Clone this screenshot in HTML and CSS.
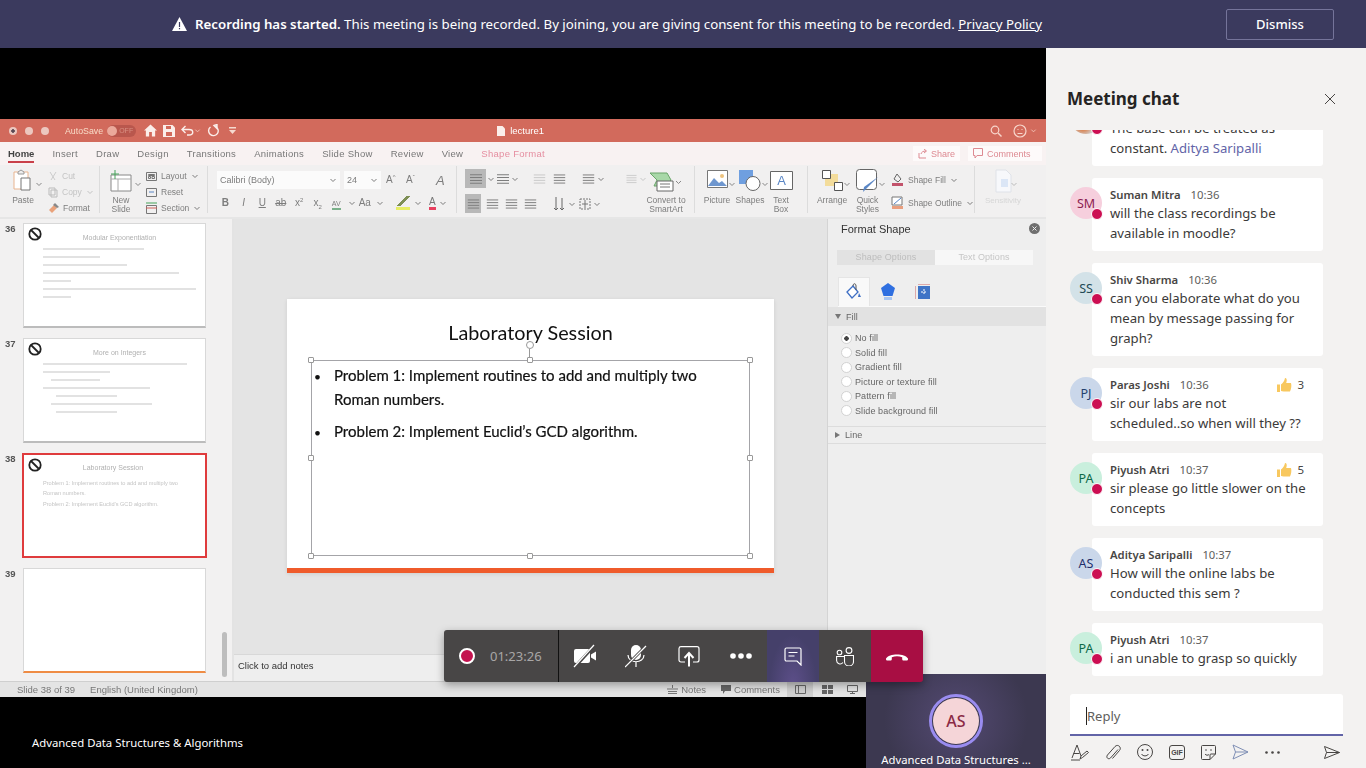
FILE: index.html
```html
<!DOCTYPE html>
<html lang="en">
<head>
    <meta charset="UTF-8">
    <meta name="viewport" content="width=device-width, initial-scale=1.0">
    <title>Meeting</title>
    <link rel="stylesheet" href="styles.css">
</head>
<body>
    <svg class="sprite" width="0" height="0">
        <symbol id="chev" viewBox="0 0 8 8"><path d="M1.5 3l2.5 2.5L6.500 3" fill="none" stroke="currentColor" stroke-width="1"/></symbol>
        <symbol id="noentry" viewBox="0 0 14 14"><circle cx="7" cy="7" r="5.700" fill="none" stroke="#222" stroke-width="1.800"/><path d="M3 3l8 8" stroke="#222" stroke-width="1.800"/></symbol>
        <symbol id="thumb" viewBox="0 0 16 16"><path d="M1 7.500h3V15H1zM5 7.500c2-1.500 3.500-3.500 4-6.500 1.800 0 2.300 2 1.200 5H15c.8 2.700.2 6-1 8.500H7.500L5 14z" fill="#f8c85f"/></symbol>
        <symbol id="lines" viewBox="0 0 16 14"><path d="M1 2h14M1 5.300h14M1 8.700h14M1 12h14" stroke="currentColor" stroke-width="1.200"/></symbol>
    </svg>

    <header class="banner">
        <svg class="banner-icon" width="15" height="14" viewBox="0 0 15 14"><path d="M7.500 0L15 14H0z" fill="#fff"/><path d="M6.900 5h1.200v5H6.900zM6.900 11h1.200v1.300H6.900z" fill="#3b3a5e"/></svg>
        <p class="banner-text"><b>Recording has started.</b> This meeting is being recorded. By joining, you are giving consent for this meeting to be recorded. <a href="#">Privacy Policy</a></p>
        <button class="dismiss">Dismiss</button>
    </header>

    <div class="workspace">
        <main class="stage">
            <div class="ppt">
                <div class="titlebar">
                    <span class="light light-close"></span><span class="light"></span><span class="light"></span>
                    <span class="autosave">AutoSave</span>
                    <span class="toggle"><i></i>OFF</span>
                    <svg width="13" height="13" viewBox="0 0 14 13"><path d="M7 0l7 6.500h-2V13H8.500V8h-3v5H2V6.500H0z" fill="#fbeeea"/></svg>
                    <svg width="12" height="12" viewBox="0 0 12 12"><path d="M0 0h9.500L12 2.500V12H0z" fill="#fbeeea"/><path d="M3 1h5v3H3zM3 7h6v4H3z" fill="#d26a5c"/></svg>
                    <svg width="13" height="11" viewBox="0 0 13 11"><path d="M4.500 1L1 4.500 4.500 8M1 4.500h7c5 0 5 5.500 0 5.500H6" fill="none" stroke="#fbeeea" stroke-width="1.400"/></svg>
                    <svg class="chev-title" width="7" height="7"><use href="#chev"/></svg>
                    <svg width="13" height="13" viewBox="0 0 13 13"><path d="M7 1.500l3 -1v4zM8.500 2.500a4.800 4.800 0 1 1-5 .5" fill="none" stroke="#fbeeea" stroke-width="1.400"/></svg>
                    <svg class="customize" width="7" height="7" viewBox="0 0 7 7"><path d="M0 0h7v1.500H0zM0 3h7L3.500 7z" fill="#f5d9cf"/></svg>
                    <span class="doc-name"><svg width="8" height="10" viewBox="0 0 8 10"><path d="M0 0h5.500L8 2.500V10H0z" fill="#fbeeea"/></svg>lecture1</span>
                    <span class="title-right">
                        <svg width="12" height="12" viewBox="0 0 12 12"><circle cx="5" cy="5" r="3.800" fill="none" stroke="#f7d5cb" stroke-width="1.200"/><path d="M8 8l3.500 3.500" stroke="#f7d5cb" stroke-width="1.400"/></svg>
                        <svg width="14" height="14" viewBox="0 0 14 14"><circle cx="7" cy="7" r="6" fill="none" stroke="#f7d5cb" stroke-width="1.200"/><path d="M4.500 5.500h1M8.500 5.500h1M4.500 9.500h5" stroke="#f7d5cb"/></svg>
                        <svg class="chev-title" width="7" height="7"><use href="#chev"/></svg>
                    </span>
                </div>

                <nav class="tabs">
                    <span class="tab tab-active">Home</span>
                    <span class="tab">Insert</span>
                    <span class="tab">Draw</span>
                    <span class="tab">Design</span>
                    <span class="tab">Transitions</span>
                    <span class="tab">Animations</span>
                    <span class="tab">Slide Show</span>
                    <span class="tab">Review</span>
                    <span class="tab">View</span>
                    <span class="tab tab-pink">Shape Format</span>
                    <span class="tab-btn tab-share"><svg width="9" height="10" viewBox="0 0 9 10"><path d="M1 4v5h7M3 5c.5-2 2-3 5-3M6 0l2.500 2L6 4" fill="none" stroke="#dd8a92"/></svg>Share</span>
                    <span class="tab-btn tab-comments"><svg width="10" height="11" viewBox="0 0 10 11"><path d="M.5.500h9v7H4L2 10V7.500H.5z" fill="none" stroke="#dd8a92"/></svg>Comments</span>
                </nav>

                <div class="ribbon">
                    <section class="rgroup g-clipboard">
                        <div class="big">
                            <svg width="22" height="23" viewBox="0 0 22 23"><path d="M2 3h14v17H2z" fill="#fff" stroke="#e8b48f"/><path d="M6 3l3-2 3 2v2H6z" fill="#eee" stroke="#999"/><path d="M9 9h9v12H9z" fill="#fff" stroke="#777"/></svg>
                            <span>Paste</span>
                        </div>
                        <svg class="chev" width="8" height="8"><use href="#chev"/></svg>
                        <ul class="small-list">
                            <li class="faded"><svg width="10" height="10" viewBox="0 0 10 10"><path d="M2 1l5 8M8 1L3 9" stroke="#ccc"/></svg>Cut</li>
                            <li class="faded"><svg width="10" height="11" viewBox="0 0 10 11"><path d="M1 1h6v7H1zM3 3h6v7H3z" fill="none" stroke="#bbb"/></svg>Copy<svg width="8" height="8"><use href="#chev"/></svg></li>
                            <li><svg width="11" height="11" viewBox="0 0 11 11"><path d="M1 7l5-5 3 3-5 5z" fill="#e9a27b"/><path d="M5 2l2-2 4 4-2 1z" fill="#888"/></svg>Format</li>
                        </ul>
                    </section>

                    <section class="rgroup g-slides">
                        <div class="big">
                            <svg width="24" height="23" viewBox="0 0 24 23"><path d="M2 6h20v16H2z" fill="#fff" stroke="#888"/><path d="M2 10h20M9 10v12" stroke="#aaa"/><path d="M6 1v9M2 5h8" stroke="#46a35a"/></svg>
                            <span>New<br>Slide</span>
                        </div>
                        <svg class="chev" width="8" height="8"><use href="#chev"/></svg>
                        <ul class="small-list">
                            <li><svg width="11" height="11" viewBox="0 0 11 11"><path d="M.5 1.500h10v8H.5zM2.500 3.500h6v1h-6zM2.500 5.500h2v2h-2zM6 5.500h2.500v2H6z" fill="none" stroke="#777"/></svg>Layout<svg width="8" height="8"><use href="#chev"/></svg></li>
                            <li><svg width="11" height="11" viewBox="0 0 11 11"><path d="M.5 1.500h10v8H.5z" fill="none" stroke="#777"/><path d="M3 5h5" stroke="#5a86c5"/></svg>Reset</li>
                            <li><svg width="11" height="12" viewBox="0 0 11 12"><path d="M0 1h11" stroke="#46a35a"/><path d="M.5 3.500h10v8H.5z" fill="none" stroke="#777"/><path d="M0 6h11" stroke="#d0605a"/></svg>Section<svg width="8" height="8"><use href="#chev"/></svg></li>
                        </ul>
                    </section>

                    <section class="rgroup g-font">
                        <div class="rrow">
                            <span class="combo combo-font">Calibri (Body)<svg width="8" height="8"><use href="#chev"/></svg></span>
                            <span class="combo combo-size">24<svg width="8" height="8"><use href="#chev"/></svg></span>
                            <span class="glyph glyph-a">A<sup>^</sup></span>
                            <span class="glyph glyph-a">A<sup>ˇ</sup></span>
                            <span class="glyph glyph-clear">A</span>
                        </div>
                        <div class="rrow rrow-fmt">
                            <b class="cell">B</b><i class="cell">I</i><u class="cell">U</u><s class="cell">ab</s><span class="cell">x<sup>2</sup></span><span class="cell">x<sub>2</sub></span>
                            <span class="cell"><span class="av">AV</span></span><svg class="m2" width="8" height="8"><use href="#chev"/></svg>
                            <span class="cell">Aa</span><svg class="m2" width="8" height="8"><use href="#chev"/></svg>
                            <span class="hl-pen"></span><svg class="m4" width="8" height="8"><use href="#chev"/></svg>
                            <span class="color-a">A</span><svg class="m3" width="8" height="8"><use href="#chev"/></svg>
                        </div>
                    </section>

                    <section class="rgroup g-para">
                        <div class="para-rows">
                            <div class="rrow rrow-para">
                                <span class="para-btn para-on"><svg width="14" height="12"><use href="#lines"/></svg></span>
                                <svg class="m1" width="8" height="8"><use href="#chev"/></svg>
                                <svg class="m1" width="14" height="12"><use href="#lines"/></svg>
                                <svg class="m1" width="8" height="8"><use href="#chev"/></svg>
                                <svg class="m14 faint" width="13" height="12"><use href="#lines"/></svg>
                                <svg class="m7" width="13" height="12"><use href="#lines"/></svg>
                                <svg class="m16" width="13" height="12"><use href="#lines"/></svg>
                                <svg class="m2" width="8" height="8"><use href="#chev"/></svg>
                                <svg class="m20 faint" width="13" height="10"><use href="#lines"/></svg>
                                <svg class="m1 faint" width="8" height="8"><use href="#chev"/></svg>
                            </div>
                            <div class="rrow rrow-para">
                                <span class="para-btn para-on para-narrow"><svg width="13" height="12"><use href="#lines"/></svg></span>
                                <svg class="m5" width="13" height="12"><use href="#lines"/></svg>
                                <svg class="m6" width="13" height="12"><use href="#lines"/></svg>
                                <svg class="m6" width="13" height="12"><use href="#lines"/></svg>
                                <svg class="m17" width="12" height="16" viewBox="0 0 12 16"><path d="M2 1v13M0 12l2 2 2-2M8 2v12M6 12l2 2 2-2" fill="none" stroke="#666"/></svg>
                                <svg class="m2" width="8" height="8"><use href="#chev"/></svg>
                                <svg class="m3" width="12" height="12" viewBox="0 0 12 12"><path d="M1 1h10v10H1z" fill="none" stroke="#777" stroke-dasharray="2 1"/><path d="M6 2v8M3 6h6" stroke="#777"/></svg>
                                <svg class="m2" width="8" height="8"><use href="#chev"/></svg>
                            </div>
                        </div>
                        <div class="big big-smartart">
                            <svg width="32" height="22" viewBox="0 0 32 22"><path d="M0 1h17l4 7-4 6H4l3-6z" fill="#a8d8a8" stroke="#6aa56a"/><path d="M7 9h16v10H7z" fill="#fff" stroke="#666"/><path d="M10 12h10M10 15h10" stroke="#777"/><path d="M26 9l2.500 2.500L31 9" fill="none" stroke="#888"/></svg>
                            <span>Convert to<br>SmartArt</span>
                        </div>
                    </section>

                    <section class="rgroup g-insert">
                        <div class="big big-picture">
                            <svg width="21" height="18" viewBox="0 0 21 18"><path d="M.5.500h20v17H.5z" fill="#fff" stroke="#777"/><path d="M1 16l6-8 5 5 3-2 5 5z" fill="#6f97cf"/><circle cx="15" cy="6" r="2" fill="#ecc27e"/></svg>
                            <span>Picture</span>
                        </div>
                        <svg class="chev" width="8" height="8"><use href="#chev"/></svg>
                        <div class="big big-shapes">
                            <svg width="23" height="21" viewBox="0 0 23 21"><path d="M0 0h14v14H0z" fill="#6f9fe0"/><circle cx="14" cy="13.500" r="7" fill="#fff" stroke="#666"/></svg>
                            <span>Shapes</span>
                        </div>
                        <svg class="chev" width="8" height="8"><use href="#chev"/></svg>
                        <div class="big big-textbox">
                            <svg class="textbox-icon" width="23" height="19" viewBox="0 0 23 19"><path d="M.5.500h22v18H.5z" fill="#fff" stroke="#666"/><text x="11.500" y="14" text-anchor="middle" font-size="13" font-family="Liberation Sans" fill="#5a86c5">A</text></svg>
                            <span>Text<br>Box</span>
                        </div>
                    </section>

                    <section class="rgroup g-drawing">
                        <div class="big big-arrange">
                            <svg width="21" height="21" viewBox="0 0 21 21"><path d="M3 4h13v12H3z" fill="#f3dc9b"/><path d="M.5.500h8v8h-8zM12.500 12.500h8v8h-8z" fill="#fff" stroke="#555"/></svg>
                            <span>Arrange</span>
                        </div>
                        <svg class="chev" width="8" height="8"><use href="#chev"/></svg>
                        <div class="big big-quick">
                            <svg width="24" height="23" viewBox="0 0 24 23"><rect x=".5" y=".5" width="20" height="20" rx="3" fill="#fff" stroke="#666"/><path d="M22 8L10 20l-3 3 1-5z" fill="#5a86c5"/></svg>
                            <span>Quick<br>Styles</span>
                        </div>
                        <svg class="chev" width="8" height="8"><use href="#chev"/></svg>
                        <ul class="small-list shape-list">
                            <li><svg width="13" height="12" viewBox="0 0 13 12"><path d="M6 0l4 5-3 3-4-3z" fill="none" stroke="#666"/><path d="M1 9h11v3H1z" fill="#c2536b"/></svg>Shape Fill<svg width="8" height="8"><use href="#chev"/></svg></li>
                            <li><svg width="13" height="13" viewBox="0 0 13 13"><path d="M1 1h10v8H1z" fill="#fff" stroke="#777"/><path d="M3 8l7-6" stroke="#5a86c5"/><path d="M1 10h11v3H1z" fill="#ea9f7e"/></svg>Shape Outline<svg width="8" height="8"><use href="#chev"/></svg></li>
                        </ul>
                    </section>

                    <section class="rgroup g-sensitivity">
                        <div class="big big-sens">
                            <svg width="17" height="24" viewBox="0 0 17 24"><path d="M1 1h10l5 5v17H1z" fill="#f7f8fb" stroke="#dfe2e8"/><path d="M6 10h7v8H6z" fill="#dbe6f6"/></svg>
                            <span>Sensitivity</span>
                        </div>
                        <svg class="chev chev-faint" width="8" height="8"><use href="#chev"/></svg>
                    </section>
                </div>

                <div class="ppt-main">
                    <aside class="thumbs">
                        <div class="thumb-row">
                            <span class="thumb-num">36</span>
                            <div class="thumb thumb-shadow">
                                <svg class="noentry" width="14" height="14"><use href="#noentry"/></svg>
                                <p class="thumb-title">Modular Exponentiation</p>
                                <span class="bar w66"></span><span class="bar w37"></span><span class="bar w55"></span><span class="bar w89"></span><span class="bar w18"></span><span class="bar w100"></span><span class="bar w18"></span>
                            </div>
                        </div>
                        <div class="thumb-row">
                            <span class="thumb-num">37</span>
                            <div class="thumb thumb-shadow">
                                <svg class="noentry" width="14" height="14"><use href="#noentry"/></svg>
                                <p class="thumb-title">More on Integers</p>
                                <span class="bar w94"></span><span class="bar w44"></span><span class="bar w32 bar-sub"></span><span class="bar w70"></span><span class="bar w40 bar-sub2"></span><span class="bar w66 bar-sub"></span><span class="bar w40 bar-sub2"></span>
                            </div>
                        </div>
                        <div class="thumb-row">
                            <span class="thumb-num">38</span>
                            <div class="thumb thumb-on">
                                <svg class="noentry" width="14" height="14"><use href="#noentry"/></svg>
                                <p class="thumb-title">Laboratory Session</p>
                                <p class="thumb-text">Problem 1: Implement routines to add and multiply two Roman numbers.</p>
                                <p class="thumb-text">Problem 2: Implement Euclid’s GCD algorithm.</p>
                            </div>
                        </div>
                        <div class="thumb-row">
                            <span class="thumb-num">39</span>
                            <div class="thumb thumb-empty"></div>
                        </div>
                        <span class="thumb-scroll"></span>
                    </aside>

                    <div class="editor">
                        <div class="canvas">
                            <div class="slide">
                                <h2 class="slide-title">Laboratory Session</h2>
                                <div class="textbox">
                                    <ul>
                                        <li>Problem 1: Implement routines to add and multiply two Roman numbers.</li>
                                        <li>Problem 2: Implement Euclid’s GCD algorithm.</li>
                                    </ul>
                                    <span class="rotate"></span>
                                    <span class="handle h-tl"></span><span class="handle h-tc"></span><span class="handle h-tr"></span>
                                    <span class="handle h-ml"></span><span class="handle h-mr"></span>
                                    <span class="handle h-bl"></span><span class="handle h-bc"></span><span class="handle h-br"></span>
                                </div>
                                <div class="slide-bar"></div>
                            </div>
                        </div>
                        <div class="notes">Click to add notes</div>
                    </div>

                    <aside class="format">
                        <div class="format-head">
                            <span>Format Shape</span>
                            <svg width="11" height="11" viewBox="0 0 11 11"><circle cx="5.500" cy="5.500" r="5.500" fill="#6f6f6f"/><path d="M3.500 3.500l4 4M7.500 3.500l-4 4" stroke="#eee"/></svg>
                        </div>
                        <div class="format-tabs">
                            <span class="ftab ftab-on">Shape Options</span>
                            <span class="ftab">Text Options</span>
                        </div>
                        <div class="format-icons">
                            <span class="ficon ficon-on"><svg width="16" height="18" viewBox="0 0 16 18"><path d="M1 9l6-6 5 6-6 6z" fill="#fff" stroke="#3f6fc4" stroke-width="1.300"/><path d="M7 3c0-3 3-3 3 0v4" fill="none" stroke="#555"/><path d="M13 10l2 4h-3z" fill="#3f6fc4"/></svg></span>
                            <span class="ficon"><svg width="14" height="17" viewBox="0 0 14 17"><path d="M7 0l7 5-2.500 8h-9L0 5z" fill="#2f6fe0"/><path d="M3 14h8v3H3z" fill="#a9c6f2"/></svg></span>
                            <span class="ficon"><svg width="15" height="15" viewBox="0 0 15 15"><path d="M3 2h12v13H3z" fill="#3f74c6"/><path d="M0 2v13M3 0h12" stroke="#c66" stroke-width="1"/><path d="M9 5v6M6 8h6" stroke="#fff" stroke-dasharray="2 1"/></svg></span>
                        </div>
                        <div class="fsection-head"><span class="tri-down"></span>Fill</div>
                        <ul class="radios">
                            <li><span class="radio radio-on"></span>No fill</li>
                            <li><span class="radio"></span>Solid fill</li>
                            <li><span class="radio"></span>Gradient fill</li>
                            <li><span class="radio"></span>Picture or texture fill</li>
                            <li><span class="radio"></span>Pattern fill</li>
                            <li><span class="radio"></span>Slide background fill</li>
                        </ul>
                        <div class="fsection-line"><span class="tri-right"></span>Line</div>
                    </aside>
                </div>

                <footer class="statusbar">
                    <span>Slide 38 of 39</span>
                    <span>English (United Kingdom)</span>
                    <span class="status-right">
                        <span class="status-item status-notes"><svg width="11" height="9" viewBox="0 0 11 9"><path d="M0 4h11M1 6.500h9M1 8.500h9M5.500 0v3" stroke="#777"/></svg>Notes</span>
                        <span class="status-item"><svg width="10" height="9" viewBox="0 0 10 9"><path d="M0 0h10v6H4L2 9V6H0z" fill="#666"/></svg>Comments</span>
                        <span class="view-btn view-on"><svg width="11" height="9" viewBox="0 0 11 9"><path d="M.5.500h10v8H.5zM3.500 1v7" fill="none" stroke="#666"/></svg></span>
                        <span class="view-btn"><svg width="11" height="9" viewBox="0 0 11 9"><path d="M0 0h5v4H0zM6 0h5v4H6zM0 5h5v4H0zM6 5h5v4H6z" fill="#666"/></svg></span>
                        <span class="view-btn"><svg width="11" height="9" viewBox="0 0 11 9"><path d="M.5.500h10v6H.5zM5.500 7v2M3 8.500h5" fill="none" stroke="#666"/></svg></span>
                    </span>
                </footer>
            </div>

            <p class="caption">Advanced Data Structures &amp; Algorithms</p>

            <!-- controls and tile float over the shared screen -->
            <div class="tile">
                <div class="tile-avatar"><span>AS</span></div>
                <p class="tile-name">Advanced Data Structures ...</p>
            </div>

            <div class="controls">
                <div class="rec-box">
                    <span class="rec-dot"></span>
                    <span class="rec-time">01:23:26</span>
                </div>
                <button class="ctrl ctrl-cam"><svg width="24" height="24" viewBox="0 0 24 24"><rect x="1" y="5" width="16" height="14" rx="2" fill="#fff"/><path d="M18 10.500l5-3v9l-5-3z" fill="#fff"/><path d="M1 24L22 1" stroke="#484646" stroke-width="3"/><path d="M1 23L21 1" stroke="#fff" stroke-width="1.200"/></svg></button>
                <button class="ctrl ctrl-mic"><svg width="22" height="24" viewBox="0 0 22 24"><rect x="6" y="1" width="10" height="15" rx="5" fill="#fff"/><path d="M3 11c0 9 16 9 16 0M11 18v5" fill="none" stroke="#fff" stroke-width="1.200"/><path d="M0 23L21 2" stroke="#484646" stroke-width="3"/><path d="M0 23L21 2" stroke="#fff" stroke-width="1.200"/></svg></button>
                <button class="ctrl ctrl-share"><svg width="22" height="21" viewBox="0 0 22 21"><path d="M7 16H3a2 2 0 0 1-2-2V2.500A2 2 0 0 1 3 .7h16a2 2 0 0 1 2 2V14a2 2 0 0 1-2 2h-4" fill="none" stroke="#fff" stroke-width="1.200"/><path d="M11 20.500V8M6.500 12L11 7l4.500 5" fill="none" stroke="#fff" stroke-width="2"/></svg></button>
                <button class="ctrl ctrl-more"><svg width="22" height="6" viewBox="0 0 22 6"><circle cx="3" cy="3" r="2.800" fill="#fff"/><circle cx="11" cy="3" r="2.800" fill="#fff"/><circle cx="19" cy="3" r="2.800" fill="#fff"/></svg></button>
                <button class="ctrl ctrl-chat"><svg width="18" height="19" viewBox="0 0 18 19"><path d="M2.500 1h13A1.500 1.500 0 0 1 17 2.500V18l-4-4H2.500A1.500 1.500 0 0 1 1 12.500v-10A1.500 1.500 0 0 1 2.500 1z" fill="none" stroke="#fff" stroke-width="1.200"/><path d="M4.500 5.500h9M4.500 9h6" stroke="#fff" stroke-width="1.200"/></svg></button>
                <button class="ctrl ctrl-people"><svg width="18" height="19" viewBox="0 0 18 19"><circle cx="13" cy="3.500" r="2.900" fill="none" stroke="#fff" stroke-width="1.100"/><circle cx="3.500" cy="5.500" r="2.300" fill="none" stroke="#fff" stroke-width="1.100"/><path d="M8.500 8.500h9v6a4.500 4.500 0 0 1-9 0z" fill="none" stroke="#fff" stroke-width="1.100"/><path d="M8.500 9.500H.6v4a3.500 3.500 0 0 0 6.300 2" fill="none" stroke="#fff" stroke-width="1.100"/></svg></button>
                <button class="ctrl-hang"><svg width="22" height="9" viewBox="0 0 22 9"><path d="M0 6.500C3 1 19 1 22 6.500c.3 1-.3 2-1 2h-3.500c-1 0-1.300-.7-1.300-1.500V5.200C13 4 9 4 5.800 5.200V7c0 .8-.3 1.500-1.300 1.500H1c-.7 0-1.300-1-1-2z" fill="#fff"/></svg></button>
            </div>
        </main>

        <aside class="chat">
            <div class="chat-head">
                <h1>Meeting chat</h1>
                <svg width="12" height="12" viewBox="0 0 12 12"><path d="M1 1l10 10M11 1L1 11" stroke="#484644" stroke-width="1"/></svg>
            </div>

            <div class="messages">
                <div class="msg">
                    <span class="avatar avatar-photo"><i class="status"></i></span>
                    <div class="msg-meta"></div>
                    <p class="msg-body">The base can be treated as constant. <a href="#">Aditya Saripalli</a></p>
                </div>
                <div class="msg">
                    <span class="avatar avatar-pink">SM<i class="status"></i></span>
                    <div class="msg-meta"><span class="msg-name">Suman Mitra</span><span class="msg-time">10:36</span></div>
                    <p class="msg-body">will the class recordings be available in moodle?</p>
                </div>
                <div class="msg">
                    <span class="avatar avatar-teal">SS<i class="status"></i></span>
                    <div class="msg-meta"><span class="msg-name">Shiv Sharma</span><span class="msg-time">10:36</span></div>
                    <p class="msg-body">can you elaborate what do you mean by message passing for graph?</p>
                </div>
                <div class="msg">
                    <span class="avatar avatar-blue">PJ<i class="status"></i></span>
                    <div class="msg-meta"><span class="msg-name">Paras Joshi</span><span class="msg-time">10:36</span>
                        <span class="reaction"><svg width="16" height="16"><use href="#thumb"/></svg>3</span></div>
                    <p class="msg-body">sir our labs are not scheduled..so when will they ??</p>
                </div>
                <div class="msg">
                    <span class="avatar avatar-green">PA<i class="status"></i></span>
                    <div class="msg-meta"><span class="msg-name">Piyush Atri</span><span class="msg-time">10:37</span>
                        <span class="reaction"><svg width="16" height="16"><use href="#thumb"/></svg>5</span></div>
                    <p class="msg-body">sir please go little slower on the concepts</p>
                </div>
                <div class="msg">
                    <span class="avatar avatar-blue avatar-navy">AS<i class="status"></i></span>
                    <div class="msg-meta"><span class="msg-name">Aditya Saripalli</span><span class="msg-time">10:37</span></div>
                    <p class="msg-body">How will the online labs be conducted this sem ?</p>
                </div>
                <div class="msg">
                    <span class="avatar avatar-green">PA<i class="status"></i></span>
                    <div class="msg-meta"><span class="msg-name">Piyush Atri</span><span class="msg-time">10:37</span></div>
                    <p class="msg-body">i an unable to grasp so quickly</p>
                </div>
            </div>

            <div class="composer">
                <div class="reply"><span class="caret"></span>Reply</div>
                <div class="composer-tools">
                    <svg width="18" height="17" viewBox="0 0 18 17"><path d="M1 14L6 1l4 11M2.500 9.500h6" fill="none" stroke="#484644"/><path d="M9 15l1-3 6-5 1.500 1.500-6 5z" fill="none" stroke="#484644"/><path d="M0 16h9" stroke="#484644"/></svg>
                    <svg width="16" height="17" viewBox="0 0 16 17"><path d="M13 5l-7.500 8.500c-2 2 -5-.5-3-3L10 2c3-3 7 1 4.500 4L7.500 14" fill="none" stroke="#484644" transform="translate(0 .5)"/></svg>
                    <svg width="16" height="16" viewBox="0 0 16 16"><circle cx="8" cy="8" r="7.500" fill="none" stroke="#484644"/><circle cx="5.500" cy="6" r="1" fill="#484644"/><circle cx="10.500" cy="6" r="1" fill="#484644"/><path d="M4.500 10c1.500 2.500 5.500 2.500 7 0" fill="none" stroke="#484644"/></svg>
                    <span class="gif">GIF</span>
                    <svg width="15" height="15" viewBox="0 0 15 15"><path d="M1.500.5h12a1 1 0 0 1 1 1V9l-5.500 5.500H1.500a1 1 0 0 1-1-1v-12a1 1 0 0 1 1-1z" fill="none" stroke="#484644"/><path d="M9 14.500V10a1 1 0 0 1 1-1h4.500M4 9c1 1.500 3 1.500 4 .5" fill="none" stroke="#484644"/><circle cx="5" cy="5" r=".8" fill="#484644"/><circle cx="10" cy="5" r=".8" fill="#484644"/></svg>
                    <svg width="17" height="16" viewBox="0 0 17 16"><path d="M1 1l15 7-15 7 2.500-7zM3.500 8H16" fill="none" stroke="#7f8fb5"/></svg>
                    <svg width="15" height="3" viewBox="0 0 15 3"><circle cx="1.500" cy="1.500" r="1.300" fill="#484644"/><circle cx="7.500" cy="1.500" r="1.300" fill="#484644"/><circle cx="13.500" cy="1.500" r="1.300" fill="#484644"/></svg>
                    <svg class="send" width="16" height="13" viewBox="0 0 16 13"><path d="M.5.500l15 6-15 6 2-6zM2.500 6.500h13" fill="none" stroke="#484644"/></svg>
                </div>
            </div>
        </aside>
    </div>
</body>
</html>
```

FILE: styles.css
```css
/* page */
* {
    box-sizing: border-box;
}

html, body {
    height: 100%;
}

body {
    margin: 0;
    width: 1366px;
    height: 768px;
    overflow: hidden;
    background: #000;
    font-family: "Noto Sans", "Liberation Sans", sans-serif;
    display: flex;
    flex-direction: column;
}

p, ul, h1, h2 {
    margin: 0;
    padding: 0;
}

ul {
    list-style: none;
}

button {
    font-family: inherit;
    border: none;
    padding: 0;
    background: none;
    color: inherit;
}

svg {
    display: block;
    flex: none;
}

.sprite {
    position: absolute;
}

/* recording banner */
.banner {
    height: 48px;
    background: #3b3a5e;
    color: #fff;
    display: flex;
    align-items: center;
    padding: 0 32px 0 172px;
    flex: none;
}

.banner-icon {
    margin-right: 8px;
}

.banner-text {
    font-size: 13.270px;
    white-space: nowrap;
}

.banner-text b {
    font-weight: 600;
}

.banner-text a {
    color: #fff;
}

.dismiss {
    margin-left: auto;
    width: 108px;
    height: 31px;
    border: 1px solid #75749a;
    border-radius: 2px;
    font-size: 13px;
    font-weight: 500;
}

.workspace {
    flex: 1;
    display: flex;
    min-height: 0;
}

/* stage and shared screen */
.stage {
    width: 1046px;
    position: relative;
    padding-top: 71px;
    overflow: hidden;
}

.ppt {
    height: 578px;
    display: flex;
    flex-direction: column;
    background: #f1f0f0;
    font-family: "Liberation Sans", sans-serif;
    filter: blur(0.45px);
    overflow: hidden;
}

.titlebar {
    height: 23px;
    background: #d26a5c;
    display: flex;
    align-items: center;
    padding-left: 9px;
    gap: 6px;
    color: #f7d9cf;
    position: relative;
    flex: none;
}

.light {
    width: 8px;
    height: 8px;
    border-radius: 50%;
    background: #ecc7bf;
    margin-right: 2px;
}

.light-close {
    background: radial-gradient(circle, #5c4a55 0 1.500px, #ecc7bf 2px);
}

.autosave {
    font-size: 8.800px;
    margin-left: 8px;
    color: #f8dcc8;
}

.toggle {
    width: 29px;
    height: 12px;
    border-radius: 6px;
    background: #b9574d;
    color: #d99083;
    font-size: 7px;
    display: flex;
    align-items: center;
    gap: 2px;
    margin-left: -2px;
    margin-right: 2px;
}

.toggle i {
    width: 10px;
    height: 10px;
    border-radius: 50%;
    background: #eba99b;
}

.chev-title {
    margin-left: -6px;
    color: #f3c7bb;
}

.customize {
    margin-left: 3px;
}

.doc-name {
    margin-left: 255px;
    font-size: 9.500px;
    color: #fff;
    display: flex;
    align-items: center;
    gap: 5px;
}

.title-right {
    margin-left: auto;
    margin-right: 9px;
    display: flex;
    align-items: center;
    gap: 11px;
}

.title-right .chev-title {
    margin-left: -8px;
}

.tabs {
    height: 23px;
    background: #f8f2f2;
    display: flex;
    align-items: center;
    padding-left: 8px;
    gap: 18px;
    font-size: 9.500px;
    letter-spacing: 0.3px;
    color: #777;
    flex: none;
}

.tab {
    line-height: 15px;
    white-space: nowrap;
}

.tab-active {
    color: #444;
    font-weight: 700;
    letter-spacing: 0;
    box-shadow: 0 2px 0 #c9404a;
}

.tab-pink {
    color: #e58ea0;
}

.tab-btn {
    height: 15px;
    background: #fdfafa;
    color: #dd8a92;
    display: flex;
    align-items: center;
    gap: 4px;
    font-size: 9px;
    letter-spacing: 0;
    padding: 0 5px;
}

.tab-share {
    margin-left: auto;
    width: 47px;
    margin-right: -10px;
}

.tab-comments {
    width: 74px;
    margin-right: 4px;
}

/* ribbon */
.ribbon {
    height: 54px;
    background: #f1f0f0;
    display: flex;
    color: #7d7d7d;
    font-size: 8.500px;
    border-bottom: 2px solid #e6e6e6;
    flex: none;
}

.rgroup {
    display: flex;
    margin: 1px 0 4px;
    border-right: 1px solid #dcdcdc;
    flex: none;
}

.g-clipboard {
    width: 100px;
    padding-left: 12px;
}

.g-slides {
    width: 108px;
    padding-left: 9px;
}

.g-font {
    width: 249px;
    padding: 5px 0 0 9px;
    flex-direction: column;
    gap: 6px;
}

.g-para {
    width: 238px;
    padding: 3px 0 0 8px;
}

.g-insert {
    width: 113px;
    padding-left: 9px;
}

.g-drawing {
    width: 167px;
    padding-left: 10px;
}

.g-sensitivity {
    width: 71px;
    padding-left: 10px;
    border-right: none;
}

.big {
    display: flex;
    flex-direction: column;
    align-items: center;
    text-align: center;
    line-height: 9px;
    padding-top: 3px;
    gap: 4px;
    white-space: nowrap;
}

.big span {
    display: block;
}

.chev {
    margin: 14px 0 0 1px;
    color: #888;
}

.chev-faint {
    color: #bbb;
    margin-left: -11px;
}

.small-list {
    margin-left: 5px;
    padding-top: 2px;
}

.g-slides .small-list {
    margin-left: 4px;
}

.small-list li {
    height: 16px;
    display: flex;
    align-items: center;
    gap: 4px;
    white-space: nowrap;
}

.small-list .faded {
    color: #c4c4c4;
}

.rrow {
    display: flex;
    align-items: center;
}

.combo {
    height: 18px;
    background: #fbfbfb;
    display: flex;
    align-items: center;
    justify-content: space-between;
    padding: 0 3px;
    font-size: 9px;
    flex: none;
}

.combo-font {
    width: 123px;
}

.combo-size {
    width: 37px;
    margin: 0 5px 0 4px;
}

.glyph {
    font-size: 10px;
}

.glyph sup {
    font-size: 6px;
}

.glyph-a {
    width: 20px;
}

.glyph-clear {
    margin-left: 10px;
    font-size: 13px;
    font-style: italic;
}

.rrow-fmt {
    font-size: 10px;
    height: 16px;
    margin-left: -1px;
}

.cell {
    width: 18.500px;
    text-align: center;
    line-height: 12px;
    flex: none;
}

.rrow-fmt sup, .rrow-fmt sub {
    font-size: 6px;
    line-height: 0;
}

.av {
    display: inline-block;
    font-size: 7px;
    border-bottom: 2px solid #7ab08a;
    line-height: 8px;
}

.hl-pen {
    width: 14px;
    height: 14px;
    margin-left: 12px;
    background: linear-gradient(135deg, transparent 45%, #7e8f55 45% 60%, transparent 60%) 0 0 / 14px 10px no-repeat, linear-gradient(#e7ee63, #e7ee63) 0 11px / 14px 3px no-repeat;
}

.color-a {
    margin-left: 7px;
    color: #777;
    border-bottom: 3px solid #e8405f;
    line-height: 11px;
}

.para-rows {
    width: 175px;
    display: flex;
    flex-direction: column;
    gap: 6px;
    flex: none;
}

.rrow-para {
    height: 19px;
}

.para-btn {
    width: 21px;
    height: 19px;
    display: flex;
    align-items: center;
    justify-content: center;
    flex: none;
}

.para-on {
    background: #b8b8b8;
}

.para-narrow {
    width: 16px;
}

/* spacing between ribbon icons */
.m1 { margin-left: 1px; }
.m2 { margin-left: 2px; }
.m3 { margin-left: 3px; }
.m4 { margin-left: 4px; }
.m5 { margin-left: 5px; }
.m6 { margin-left: 6px; }
.m7 { margin-left: 7px; }
.m14 { margin-left: 14px; }
.m16 { margin-left: 16px; }
.m17 { margin-left: 17px; }
.m20 { margin-left: 20px; }

.faint {
    color: #c8c8c8;
}

.big-smartart {
    width: 50px;
    margin-left: 1px;
    flex: none;
    gap: 1.500px;
}

.big-picture {
    width: 26px;
    padding-top: 4px;
}

.big-picture span {
    margin-top: 3.500px;
}

.big-shapes {
    width: 26px;
    margin-left: 1px;
    padding-top: 4px;
}

.big-shapes span {
    margin-top: 0.500px;
}

.g-insert .chev {
    margin-left: -2px;
}

.big-textbox {
    width: 24px;
    padding-top: 5px;
}

.textbox-icon {
    margin-bottom: 2px;
}

.big-arrange {
    width: 28px;
    padding-top: 4px;
}

.big-arrange span {
    margin-top: 0.500px;
}

.big-quick {
    width: 27px;
    margin-left: 3px;
}

.g-drawing .chev {
    margin-left: -3px;
}

.shape-list {
    margin-left: 5px;
    padding-top: 2px;
}

.shape-list li {
    height: 23px;
}

.big-sens span {
    color: #d6d6d6;
    font-size: 8px;
}

.big-sens {
    padding-top: 3px;
    gap: 3px;
}

/* panes under the ribbon */
.ppt-main {
    flex: 1;
    display: flex;
    min-height: 0;
}

.thumbs {
    width: 234px;
    background: #f2f1f1;
    border-right: 2px solid #e3e3e3;
    padding-top: 4px;
    display: flex;
    flex-direction: column;
    gap: 10px;
    position: relative;
}

.thumb-row {
    display: flex;
    align-items: flex-start;
    padding-left: 5px;
}

.thumb-num {
    width: 18px;
    font-size: 9.500px;
    font-weight: 700;
    color: #555;
}

.thumb {
    width: 183px;
    height: 105px;
    background: #fff;
    border: 1px solid #d8d8d8;
    position: relative;
    padding: 10px 9px 0 19px;
    overflow: hidden;
}

.thumb-shadow {
    border-bottom: 2px solid #bcbcbc;
}

.thumb-on {
    border: 2px solid #df3b3d;
    width: 185px;
    margin-left: -1px;
    padding-top: 9px;
    padding-right: 22px;
}

.thumb-empty {
    border-bottom: 2px solid #ef8c45;
}

.noentry {
    position: absolute;
    left: 4px;
    top: 3px;
}

.thumb-title {
    text-align: center;
    font-size: 7px;
    color: #b0b0b0;
    margin-bottom: 7px;
    filter: blur(0.3px);
}

.bar {
    display: block;
    height: 2px;
    background: #e2e2e2;
    margin-bottom: 6px;
    filter: blur(0.5px);
}

.w18 { width: 18%; }
.w32 { width: 32%; }
.w37 { width: 37%; }
.w40 { width: 40%; }
.w44 { width: 44%; }
.w55 { width: 55%; }
.w66 { width: 66%; }
.w70 { width: 70%; }
.w89 { width: 89%; }
.w94 { width: 94%; }
.w100 { width: 100%; }

.bar-sub {
    margin-left: 8px;
}

.bar-sub2 {
    margin-left: 13px;
}

.thumb-text {
    font-size: 5.600px;
    line-height: 10px;
    color: #c4c4c4;
    margin-bottom: 1px;
    filter: blur(0.4px);
}

.thumb-scroll {
    position: absolute;
    left: 222px;
    top: 413px;
    width: 5px;
    height: 45px;
    border-radius: 3px;
    background: #bdbdbd;
}

.editor {
    width: 593px;
    display: flex;
    flex-direction: column;
    background: #e4e4e4;
}

.canvas {
    flex: 1;
    display: flex;
    align-items: center;
    justify-content: center;
    padding-bottom: 2px;
}

.slide {
    width: 487px;
    height: 274px;
    background: #fff;
    box-shadow: 0 1px 4px rgba(0, 0, 0, 0.1);
    display: flex;
    flex-direction: column;
    font-family: Lato, sans-serif;
    color: #111;
}

.slide-title {
    font-size: 19.800px;
    font-weight: 400;
    text-align: center;
    line-height: 24px;
    margin-top: 21px;
    height: 40px;
}

.textbox {
    width: 439px;
    height: 196px;
    margin-left: 24px;
    border: 1px solid #a4a4a8;
    position: relative;
    padding: 2px 0 0 22px;
    font-size: 15px;
    line-height: 24px;
    -webkit-text-stroke: 0.2px #111;
}

.textbox li {
    margin-bottom: 8px;
    padding-right: 40px;
    text-indent: -20px;
}

.textbox li::before {
    content: "•";
    display: inline-block;
    width: 20px;
    text-indent: 0;
    font-size: 12px;
    line-height: 0;
}

.handle {
    position: absolute;
    width: 6px;
    height: 6px;
    background: #fff;
    border: 1px solid #999;
    border-radius: 1px;
}

.h-tl { left: -4px; top: -4px; }
.h-tc { left: 215px; top: -4px; }
.h-tr { right: -4px; top: -4px; }
.h-ml { left: -4px; top: 94px; }
.h-mr { right: -4px; top: 94px; }
.h-bl { left: -4px; bottom: -4px; }
.h-bc { left: 215px; bottom: -4px; }
.h-br { right: -4px; bottom: -4px; }

.rotate {
    position: absolute;
    left: 214px;
    top: -20px;
    width: 8px;
    height: 8px;
    border: 1px solid #999;
    border-radius: 50%;
    background: #fff;
}

.rotate::after {
    content: "";
    position: absolute;
    left: 2px;
    top: 7px;
    width: 1px;
    height: 10px;
    background: #999;
}

.slide-bar {
    margin-top: auto;
    height: 5px;
    background: #ef5b2b;
}

.notes {
    height: 27px;
    background: #eeeeee;
    border-top: 1px solid #d8d8d8;
    padding-left: 4px;
    font-size: 9.500px;
    line-height: 22px;
    color: #333;
}

.format {
    flex: 1;
    background: #eeeeee;
    border-left: 1px solid #d4d4d4;
    font-size: 9px;
    letter-spacing: 0.1px;
    color: #666;
}

.format-head {
    height: 19px;
    padding: 0 6px 0 13px;
    display: flex;
    align-items: center;
    justify-content: space-between;
    font-size: 11px;
    letter-spacing: 0;
    color: #333;
}

.format-tabs {
    display: flex;
    margin: 12px 0 0 9px;
    height: 15px;
}

.ftab {
    width: 98px;
    text-align: center;
    line-height: 15px;
    background: #f7f7f7;
    color: #c6c6c6;
    font-size: 9px;
}

.ftab-on {
    background: #e2e2e2;
    color: #bdbdbd;
}

.format-icons {
    display: flex;
    margin: 12px 0 0 10px;
    height: 30px;
    border-bottom: 1px solid #fafafa;
}

.ficon {
    width: 32px;
    display: flex;
    align-items: center;
    justify-content: center;
    margin-right: 2px;
}

.ficon-on {
    background: #f9f9f9;
    border: 1px solid #e5e5e5;
    border-bottom: none;
}

.fsection-head {
    height: 19px;
    background: #e2e2e2;
    display: flex;
    align-items: center;
    gap: 5px;
    padding-left: 7px;
    margin-bottom: 5px;
}

.tri-down {
    border: 3.500px solid transparent;
    border-top: 5px solid #777;
    border-bottom: none;
}

.tri-right {
    border: 3.500px solid transparent;
    border-left: 5px solid #777;
    border-right: none;
}

.radios li {
    height: 14.500px;
    display: flex;
    align-items: center;
    gap: 3px;
    padding-left: 13px;
}

.radio {
    width: 11px;
    height: 11px;
    border-radius: 50%;
    background: #fff;
    border: 1px solid #d2d2d2;
}

.radio-on {
    background: radial-gradient(circle, #444 0 2px, #fff 2.500px);
}

.fsection-line {
    margin-top: 8px;
    height: 18px;
    border-top: 1px solid #dcdcdc;
    border-bottom: 1px solid #dcdcdc;
    display: flex;
    align-items: center;
    gap: 5px;
    padding-left: 7px;
}

.statusbar {
    height: 16px;
    background: #e4e4e4;
    border-top: 1px solid #cfcfcf;
    display: flex;
    align-items: center;
    gap: 15px;
    padding: 0 188px 0 17px;
    font-size: 9.500px;
    color: #777;
    flex: none;
}

.status-right {
    margin-left: auto;
    display: flex;
    align-items: center;
    height: 100%;
}

.status-item {
    display: flex;
    align-items: center;
    gap: 3px;
    margin-right: 7px;
}

.status-notes {
    margin-right: 15px;
}

.view-btn {
    width: 11px;
    height: 100%;
    margin-right: 14px;
    display: flex;
    align-items: center;
    justify-content: center;
}

.view-on {
    width: 26px;
    margin-right: 9px;
    background: #cfcfcf;
}

.view-btn:last-child {
    margin-right: 0;
}

.caption {
    padding: 38px 0 0 32px;
    font-size: 11.350px;
    color: #fff;
    line-height: 16px;
}

/* participant tile */
.tile {
    position: absolute;
    left: 866px;
    top: 626px;
    width: 180px;
    height: 94px;
    background: radial-gradient(circle at 50% 48%, #544a73 0, #3c3850 70%);
    display: flex;
    flex-direction: column;
    align-items: center;
}

.tile-avatar {
    width: 54px;
    height: 54px;
    margin-top: 20px;
    border: 3px solid #9a8cf0;
    border-radius: 50%;
    padding: 1px;
    background: #3c3850;
}

.tile-avatar span {
    display: flex;
    align-items: center;
    justify-content: center;
    width: 100%;
    height: 100%;
    border-radius: 50%;
    background: #f5d5d8;
    color: #8b2a45;
    font-size: 16px;
    font-weight: 500;
}

.tile-name {
    font-size: 11.300px;
    color: #fff;
    margin-top: 4px;
    white-space: nowrap;
}

/* meeting controls */
.controls {
    position: absolute;
    left: 444px;
    top: 582px;
    width: 479px;
    height: 52px;
    background: #484646;
    border-radius: 3px;
    box-shadow: 0 3px 8px rgba(0, 0, 0, 0.35);
    display: flex;
    align-items: center;
    overflow: hidden;
}

.rec-box {
    width: 115px;
    height: 100%;
    border-right: 1px solid #111;
    display: flex;
    align-items: center;
    padding-left: 15px;
}

.rec-dot {
    width: 16px;
    height: 16px;
    border-radius: 50%;
    background: #c4134f;
    border: 2px solid #fff;
    margin-right: 15px;
}

.rec-time {
    font-size: 13px;
    color: #a8a6a6;
}

.ctrl {
    width: 52px;
    height: 100%;
    display: flex;
    align-items: center;
    justify-content: center;
}

.ctrl-cam {
    width: 51px;
}

.ctrl-mic {
    width: 51px;
}

.ctrl-share {
    width: 55px;
}

.ctrl-more {
    width: 50px;
}

.ctrl-chat {
    background: radial-gradient(ellipse at 50% 110%, #5d4f8a 0, #45406a 65%);
    margin-left: 1px;
}

.ctrl-hang {
    width: 52px;
    height: 100%;
    background: #a80e43;
    display: flex;
    align-items: center;
    justify-content: center;
}

/* chat panel */
.chat {
    width: 320px;
    background: #f3f2f1;
    display: flex;
    flex-direction: column;
    color: #252423;
}

.chat-head {
    height: 82px;
    padding: 19px 30px 0 21px;
    display: flex;
    align-items: center;
    justify-content: space-between;
    flex: none;
}

.chat-head h1 {
    font-size: 17px;
    font-weight: 700;
}

.messages {
    height: 548px;
    display: flex;
    flex-direction: column;
    justify-content: flex-end;
    gap: 12px;
    overflow: hidden;
    padding: 0 43px 2px 46px;
    flex: none;
}

.msg {
    background: #fff;
    border-radius: 3px;
    padding: 8px 12px 8px 18px;
    position: relative;
    flex: none;
}

.msg-meta {
    display: flex;
    align-items: center;
    height: 17px;
    font-size: 11.300px;
    gap: 10px;
}

.msg-name {
    font-weight: 600;
    color: #484644;
}

.msg-time {
    color: #605e5c;
}

.msg-body {
    font-size: 13.150px;
    line-height: 20px;
    color: #3b3a39;
}

.msg-body a {
    color: #6264a7;
    text-decoration: none;
}

.reaction {
    margin-left: auto;
    margin-right: 7px;
    display: flex;
    align-items: center;
    gap: 5px;
    color: #484644;
    font-size: 11.500px;
}

.avatar {
    position: absolute;
    left: -22px;
    top: 9px;
    width: 32px;
    height: 32px;
    border-radius: 50%;
    display: flex;
    align-items: center;
    justify-content: center;
    font-size: 12.500px;
}

.status {
    position: absolute;
    left: 21px;
    top: 21px;
    width: 12px;
    height: 12px;
    border-radius: 50%;
    background: #cc0e52;
    border: 1.500px solid #fff;
}

.avatar-photo {
    background: radial-gradient(circle at 40% 70%, #d98a5c 0 6px, #cfcfcf 12px);
}

.avatar-pink {
    background: #f6cfdd;
    color: #8c1d50;
}

.avatar-teal {
    background: #d3e2e8;
    color: #234a55;
}

.avatar-blue {
    background: #cad7ea;
    color: #24406e;
}

.avatar-navy {
    color: #1f2f6b;
}

.avatar-green {
    background: #c9efdd;
    color: #0d6a48;
}

/* reply box */
.composer {
    padding: 16px 23px 0 24px;
}

.reply {
    height: 42px;
    background: #fff;
    border-bottom: 2px solid #6264a7;
    border-radius: 3px 3px 0 0;
    padding: 4px 0 0 16px;
    display: flex;
    align-items: center;
    font-size: 13px;
    color: #605e5c;
}

.caret {
    width: 1px;
    height: 18px;
    background: #252423;
}

.composer-tools {
    display: flex;
    align-items: center;
    height: 32px;
    padding-left: 1px;
    gap: 16px;
}

.gif {
    width: 16px;
    height: 15px;
    border: 1px solid #484644;
    border-radius: 3px;
    font-family: "Liberation Sans", sans-serif;
    font-size: 7px;
    font-weight: 700;
    text-align: center;
    line-height: 13px;
    color: #484644;
}

.send {
    margin-left: auto;
    margin-right: 3px;
}
```
